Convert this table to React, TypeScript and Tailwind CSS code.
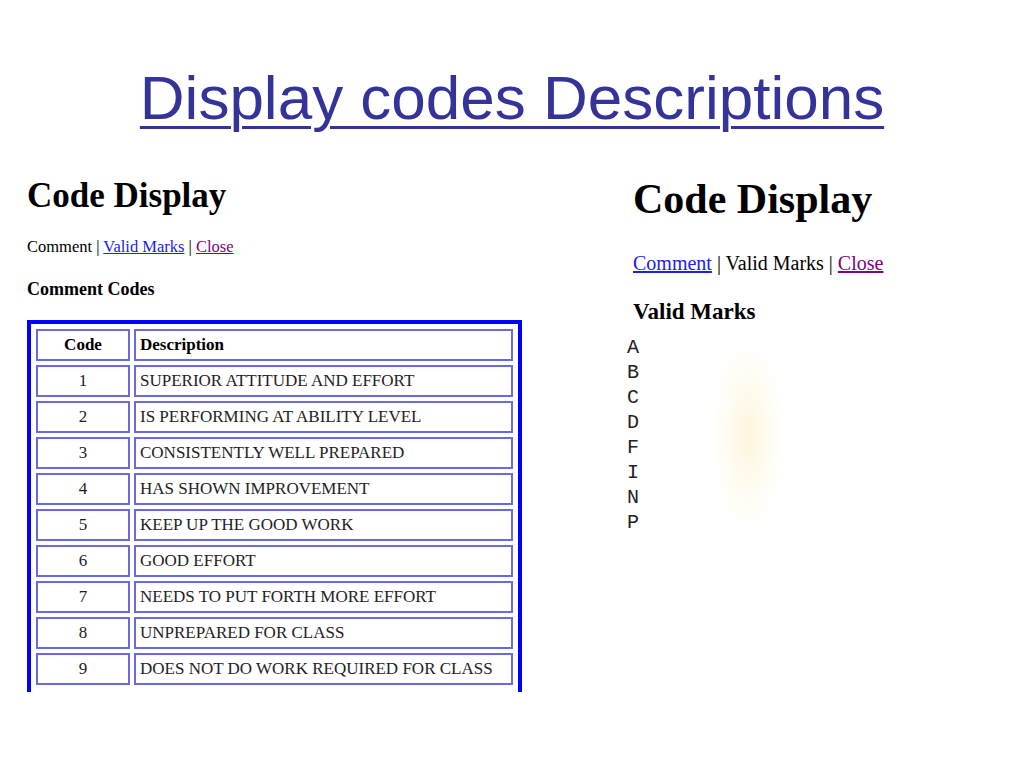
import React from 'react';

const rows: [string, string][] = [
  ['1', 'SUPERIOR ATTITUDE AND EFFORT'],
  ['2', 'IS PERFORMING AT ABILITY LEVEL'],
  ['3', 'CONSISTENTLY WELL PREPARED'],
  ['4', 'HAS SHOWN IMPROVEMENT'],
  ['5', 'KEEP UP THE GOOD WORK'],
  ['6', 'GOOD EFFORT'],
  ['7', 'NEEDS TO PUT FORTH MORE EFFORT'],
  ['8', 'UNPREPARED FOR CLASS'],
  ['9', 'DOES NOT DO WORK REQUIRED FOR CLASS'],
];

const marks = ['A', 'B', 'C', 'D', 'F', 'I', 'N', 'P'];

const serif = "font-['Liberation_Serif','Times_New_Roman',serif]";

function CommentPanel() {
  return (
    <div className={`${serif} text-black w-[495px]`}>
      <h2 className="text-[35px] leading-[40px] font-bold">Code Display</h2>
      <div className="mt-[21px] text-[16.5px] leading-[20px]">
        Comment |{' '}
        <a href="#" className="text-[#2020ee] underline">Valid Marks</a> |{' '}
        <a href="#" className="text-[#800080] underline">Close</a>
      </div>
      <h3 className="mt-[21px] text-[18px] leading-[22px] font-bold">Comment Codes</h3>

      {/* table is cut off at the bottom of the slide */}
      <div className="mt-[20px] h-[372px] overflow-hidden border-4 border-b-0 border-[#0000ff] px-[1px] pt-[1px]">
        <table className="w-full border-separate border-spacing-x-[4px] border-spacing-y-[4.2px] text-[17px] text-[#222]">
          <tbody>
            <tr>
              <th className="h-[32px] w-[94px] border-2 border-[#6a6ade] p-0 text-center font-bold text-black">Code</th>
              <th className="h-[32px] border-2 border-[#6a6ade] p-0 pl-[4px] text-left font-bold text-black">Description</th>
            </tr>
            {rows.map(([code, desc]) => (
              <tr key={code}>
                <td className="h-[32px] w-[94px] border-2 border-[#6a6ade] p-0 text-center">{code}</td>
                <td className="h-[32px] border-2 border-[#6a6ade] p-0 pl-[4px] whitespace-nowrap">{desc}</td>
              </tr>
            ))}
          </tbody>
        </table>
      </div>
    </div>
  );
}

function MarksPanel() {
  return (
    <div className={`${serif} relative text-black`}>
      <h2 className="text-[42px] leading-[46px] font-bold">Code Display</h2>
      <div className="mt-[29px] text-[20px] leading-[24px]">
        <a href="#" className="text-[#2020ee] underline">Comment</a> | Valid Marks |{' '}
        <a href="#" className="text-[#800080] underline">Close</a>
      </div>
      <h3 className="mt-[24px] text-[23px] leading-[26px] font-bold">Valid Marks</h3>
      <ul className="mt-[10px] -ml-[6px] font-['Liberation_Mono','Courier_New',monospace] text-[20px] leading-[25px] text-[#222]">
        {marks.map((m) => (
          <li key={m}>{m}</li>
        ))}
      </ul>
      {/* faint smudge left over in the screenshot */}
      <div className="pointer-events-none absolute left-[80px] top-[165px] h-[190px] w-[70px] rounded-full bg-[radial-gradient(ellipse_at_center,#fdf5dc_0%,#fffcf3_45%,transparent_75%)]" />
    </div>
  );
}

export default function App() {
  return (
    <div className="w-[1024px] h-[768px] overflow-hidden bg-white">
      <h1 className="pt-[62px] text-center font-['Liberation_Sans',Arial,sans-serif] text-[62px] leading-[72px] text-[#333399] underline decoration-[3px] underline-offset-[7px]">
        Display codes Descriptions
      </h1>
      <div className="mt-[42px] flex">
        <div className="ml-[27px]">
          <CommentPanel />
        </div>
        <div className="ml-[111px]">
          <MarksPanel />
        </div>
      </div>
    </div>
  );
}
